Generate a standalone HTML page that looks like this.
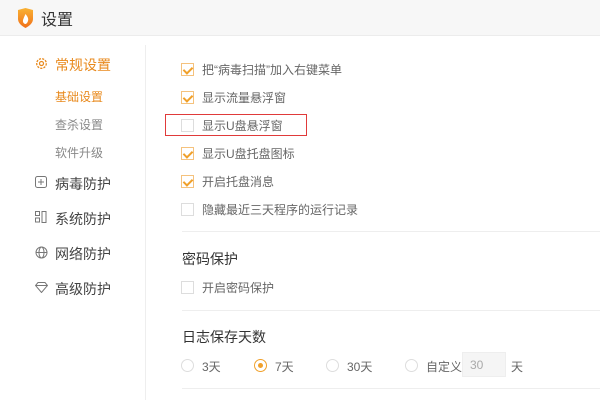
<!DOCTYPE html>
<html><head><meta charset="utf-8"><style>
*{margin:0;padding:0;box-sizing:border-box}
body{width:600px;height:400px;background:#fff;font-family:"Liberation Sans","Noto Sans CJK SC",sans-serif;position:relative;overflow:hidden;color:#333}
.a{position:absolute;white-space:nowrap}
.hdr{left:0;top:0;width:600px;height:36px;background:#f7f7f7;border-bottom:1px solid #ececec}
.cb{position:absolute;width:13px;height:13px;border:1px solid #ddd;background:#fff}
.cb.on{border-color:#f5c27d}
.cb.on::after{content:"";position:absolute;left:3px;top:1px;width:4px;height:7px;border:solid #f0a02a;border-width:0 2px 2px 0;transform:rotate(45deg)}
.lbl{font-size:12px;color:#666}
.nav{font-size:14px;color:#444}
.sub{font-size:12px;color:#888}
.sep{left:182px;width:418px;height:1px;background:#eee}
.rd{position:absolute;width:13px;height:13px;border:1px solid #ddd;border-radius:50%}
.rd.on{border-color:#f0a02a}
.rd.on::after{content:"";position:absolute;left:3px;top:3px;width:5px;height:5px;border-radius:50%;background:#f0a02a}
</style></head><body>
<div class="a hdr"></div>
<svg class="a" style="left:17px;top:8px" width="17" height="20" viewBox="0 0 17 20"><defs><linearGradient id="g" x1="0" y1="0" x2="0" y2="1"><stop offset="0" stop-color="#f9b233"/><stop offset="1" stop-color="#f0701a"/></linearGradient></defs><path d="M1 2 L8.5 0 L16 2 L16 11 Q16 16 8.5 20 Q1 16 1 11Z" fill="url(#g)"/><path d="M8.5 6 Q12 10 11 13 Q10 16 8 16 Q5.5 15 6 12 Q7 9 8.5 6Z" fill="#fff"/></svg>
<div class="a" style="left:41px;top:6px;font-size:16px;color:#333">设置</div>
<div class="a" style="left:145px;top:45px;width:1px;height:355px;background:#eee"></div>
<svg class="a" style="left:35px;top:57px" width="13" height="13" viewBox="0 0 13 13"><circle cx="6.5" cy="6.5" r="4.8" fill="none" stroke="#e8891c" stroke-width="1.3" stroke-dasharray="2.2 1.1"/><circle cx="6.5" cy="6.5" r="2" fill="none" stroke="#e8891c" stroke-width="1.2"/></svg>
<div class="a" style="left:55px;top:55px;font-size:14px;color:#e8891c">常规设置</div>
<div class="a sub" style="left:55px;top:88px;color:#e8891c">基础设置</div>
<div class="a sub" style="left:55px;top:116px">查杀设置</div>
<div class="a sub" style="left:55px;top:144px">软件升级</div>
<svg class="a" style="left:35px;top:176px" width="12" height="12"><rect x=".5" y=".5" width="11" height="11" rx="2" fill="none" stroke="#777"/><path d="M6 3v6M3 6h6" stroke="#777"/></svg>
<div class="a nav" style="left:55px;top:174px">病毒防护</div>
<svg class="a" style="left:35px;top:211px" width="12" height="12"><rect x=".5" y=".5" width="4" height="4" fill="none" stroke="#777"/><rect x=".5" y="7" width="4" height="4" fill="none" stroke="#777"/><rect x="7" y=".5" width="4" height="11" fill="none" stroke="#777"/></svg>
<div class="a nav" style="left:55px;top:209px">系统防护</div>
<svg class="a" style="left:35px;top:246px" width="13" height="13"><circle cx="6.5" cy="6.5" r="5.5" fill="none" stroke="#777"/><ellipse cx="6.5" cy="6.5" rx="2.5" ry="5.5" fill="none" stroke="#777"/><path d="M1 6.5h11" stroke="#777"/></svg>
<div class="a nav" style="left:55px;top:244px">网络防护</div>
<svg class="a" style="left:35px;top:282px" width="13" height="11"><path d="M3 .5h7l2.5 3L6.5 10.5.5 3.5Z M.5 3.5h12" fill="none" stroke="#777"/></svg>
<div class="a nav" style="left:55px;top:279px">高级防护</div>

<div class="cb on" style="left:181px;top:63px"></div><div class="a lbl" style="left:202px;top:61px">把“病毒扫描”加入右键菜单</div>
<div class="cb on" style="left:181px;top:91px"></div><div class="a lbl" style="left:202px;top:89px">显示流量悬浮窗</div>
<div class="a" style="left:165px;top:114px;width:142px;height:22px;border:1.5px solid #e03a3a"></div>
<div class="cb" style="left:181px;top:119px"></div><div class="a lbl" style="left:202px;top:117px">显示U盘悬浮窗</div>
<div class="cb on" style="left:181px;top:147px"></div><div class="a lbl" style="left:202px;top:145px">显示U盘托盘图标</div>
<div class="cb on" style="left:181px;top:175px"></div><div class="a lbl" style="left:202px;top:173px">开启托盘消息</div>
<div class="cb" style="left:181px;top:203px"></div><div class="a lbl" style="left:202px;top:201px">隐藏最近三天程序的运行记录</div>
<div class="a sep" style="top:231px"></div>
<div class="a" style="left:182px;top:249px;font-size:14px;color:#333">密码保护</div>
<div class="cb" style="left:181px;top:281px"></div><div class="a lbl" style="left:202px;top:279px">开启密码保护</div>
<div class="a sep" style="top:310px"></div>
<div class="a" style="left:182px;top:327px;font-size:14px;color:#333">日志保存天数</div>
<div class="rd" style="left:181px;top:359px"></div><div class="a lbl" style="left:202px;top:358px">3天</div>
<div class="rd on" style="left:254px;top:359px"></div><div class="a lbl" style="left:275px;top:358px">7天</div>
<div class="rd" style="left:326px;top:359px"></div><div class="a lbl" style="left:347px;top:358px">30天</div>
<div class="rd" style="left:405px;top:359px"></div><div class="a lbl" style="left:426px;top:358px">自定义</div>
<div class="a" style="left:462px;top:352px;width:44px;height:25px;background:#f5f5f5;border:1px solid #eee"></div>
<div class="a lbl" style="left:470px;top:358px;color:#aaa">30</div>
<div class="a lbl" style="left:511px;top:358px">天</div>
<div class="a sep" style="top:388px"></div>
</body></html>
